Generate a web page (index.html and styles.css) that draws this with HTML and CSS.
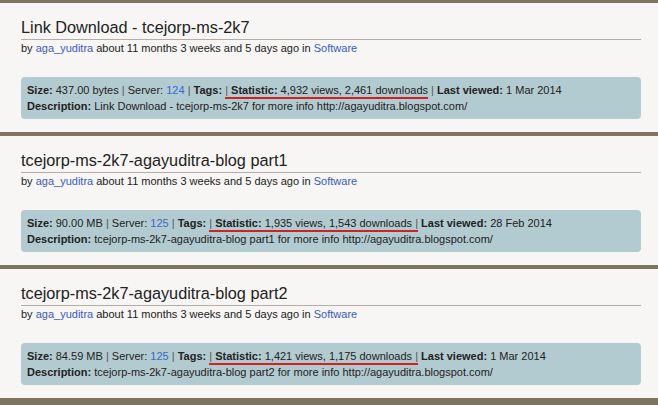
FILE: index.html
```html
<!DOCTYPE html>
<html lang="en">
<head>
    <meta charset="UTF-8">
    <title>Downloads</title>
    <link rel="stylesheet" href="styles.css">
</head>
<body>

<div class="file-list">
    <div class="file-item">
        <h2 class="file-title">Link Download - tcejorp-ms-2k7</h2>
        <div class="file-meta">by <a href="#">aga_yuditra</a> about 11 months 3 weeks and 5 days ago in <a href="#">Software</a></div>
        <div class="file-info">
            <div><b>Size:</b> 437.00 bytes <span class="sep">|</span> Server: <a href="#">124</a> <span class="sep">|</span> <b>Tags:</b> <span class="mark"><span class="sep">|</span> <b>Statistic:</b> 4,932 views, 2,461 downloads</span> <span class="sep">|</span> <b>Last viewed:</b> 1 Mar 2014</div>
            <div><b>Description:</b> Link Download - tcejorp-ms-2k7 for more info http://agayuditra.blogspot.com/</div>
        </div>
    </div>

    <div class="file-item">
        <h2 class="file-title">tcejorp-ms-2k7-agayuditra-blog part1</h2>
        <div class="file-meta">by <a href="#">aga_yuditra</a> about 11 months 3 weeks and 5 days ago in <a href="#">Software</a></div>
        <div class="file-info">
            <div><b>Size:</b> 90.00 MB <span class="sep">|</span> Server: <a href="#">125</a> <span class="sep">|</span> <b>Tags:</b> <span class="mark"><span class="sep">|</span> <b>Statistic:</b> 1,935 views, 1,543 downloads <span class="sep">|</span></span> <b>Last viewed:</b> 28 Feb 2014</div>
            <div><b>Description:</b> tcejorp-ms-2k7-agayuditra-blog part1 for more info http://agayuditra.blogspot.com/</div>
        </div>
    </div>

    <div class="file-item">
        <h2 class="file-title">tcejorp-ms-2k7-agayuditra-blog part2</h2>
        <div class="file-meta">by <a href="#">aga_yuditra</a> about 11 months 3 weeks and 5 days ago in <a href="#">Software</a></div>
        <div class="file-info">
            <div><b>Size:</b> 84.59 MB <span class="sep">|</span> Server: <a href="#">125</a> <span class="sep">|</span> <b>Tags:</b> <span class="mark"><span class="sep">|</span> <b>Statistic:</b> 1,421 views, 1,175 downloads <span class="sep">|</span></span> <b>Last viewed:</b> 1 Mar 2014</div>
            <div><b>Description:</b> tcejorp-ms-2k7-agayuditra-blog part2 for more info http://agayuditra.blogspot.com/</div>
        </div>
    </div>
</div>

</body>
</html>
```

FILE: styles.css
```css
body {
    margin: 0;
    padding: 0;
    background: #7d7361;
    font-family: "Liberation Sans", Arial, sans-serif;
    color: #222222;
}

.file-list {
    display: flex;
    flex-direction: column;
    gap: 4px;
    padding-top: 3px;
}

.file-item {
    background: #f7f6f4;
    height: 129px;
    box-sizing: border-box;
    padding: 14px 17px 0 21px;
}

.file-title {
    margin: 0;
    font-size: 16.25px;
    font-weight: normal;
    line-height: 20px;
    padding-bottom: 2px;
    border-bottom: 1px solid #b3ada5;
}

.file-meta {
    font-size: 11px;
    line-height: 14px;
    margin-top: 1px;
}

a {
    color: #3a5bbf;
    text-decoration: none;
}

.file-info {
    margin-top: 22px;
    background: #b2cbd1;
    border-radius: 4px;
    padding: 5px 6px;
    font-size: 11px;
    line-height: 16px;
}

.file-info a {
    color: #3a68c9;
}

.sep {
    color: #555555;
}

.mark {
    border-bottom: 2px solid #d32020;
    padding-bottom: 1px;
}
```
